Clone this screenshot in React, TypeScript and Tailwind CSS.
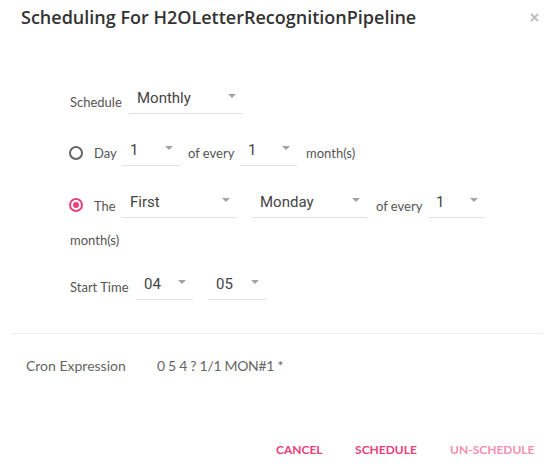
import React from "react";

const label = "font-['Lato','Liberation_Sans',sans-serif] text-[13px] leading-[20px] text-[#555]";

function Arrow() {
  return (
    <svg className="absolute right-[7px] top-[10px]" width="8" height="4" viewBox="0 0 8 4">
      <path d="M0 0 L8 0 L4 4 Z" fill="#a3a3a3" />
    </svg>
  );
}

function Select({ value, w }: { value: string; w: string }) {
  return (
    <div className={`relative h-[30px] border-b border-[#e0e0e0] ${w}`}>
      <div className="pt-[4px] pl-[8px] font-['Roboto',sans-serif] text-[15px] leading-[20px] text-[#444]">
        {value}
      </div>
      <Arrow />
    </div>
  );
}

function Radio({ checked }: { checked?: boolean }) {
  return (
    <div
      className={`mt-[10px] ml-[-1px] flex h-[14px] w-[14px] items-center justify-center rounded-full border-2 ${
        checked ? "border-[#ec407a]" : "border-[#666]"
      }`}
    >
      {checked && <div className="h-[6px] w-[6px] rounded-full bg-[#ec407a]" />}
    </div>
  );
}

export default function App() {
  return (
    <div className="h-[475px] w-[553px] bg-white">
      {/* header */}
      <div className="flex items-start justify-between pl-[21px] pr-[14px] pt-[5px]">
        <h1 className="font-['Open_Sans','Noto_Sans',sans-serif] text-[18px] font-semibold leading-[24px] text-[#333]">
          Scheduling For H2OLetterRecognitionPipeline
        </h1>
        <svg className="mt-[8px]" width="9" height="9" viewBox="0 0 9 9">
          <path d="M1 1 L8 8 M8 1 L1 8" stroke="#bdbdbd" strokeWidth="1.8" />
        </svg>
      </div>

      {/* form */}
      <div className="pl-[70px]">
        <div className="mt-[55px] flex items-start">
          <span className={`${label} mt-[8px] w-[59px]`}>Schedule</span>
          <Select value="Monthly" w="w-[114px]" />
        </div>

        <div className="mt-[22px] flex items-start">
          <Radio />
          <span className={`${label} ml-[11px] mt-[7px] w-[28px]`}>Day</span>
          <Select value="1" w="w-[58px]" />
          <span className={`${label} ml-[8px] mt-[7px] w-[52px]`}>of every</span>
          <Select value="1" w="w-[57px]" />
          <span className={`${label} ml-[9px] mt-[7px]`}>month(s)</span>
        </div>

        <div className="mt-[22px] flex items-start">
          <Radio checked />
          <span className={`${label} ml-[11px] mt-[8px] w-[28px]`}>The</span>
          <Select value="First" w="w-[115px]" />
          <div className="ml-[15px]">
            <Select value="Monday" w="w-[115px]" />
          </div>
          <span className={`${label} ml-[9px] mt-[8px] w-[52px]`}>of every</span>
          <Select value="1" w="w-[57px]" />
        </div>
        <div className={`${label} mt-[12px]`}>month(s)</div>

        <div className="mt-[20px] flex items-start">
          <span className={`${label} mt-[7px] w-[66px]`}>Start Time</span>
          <Select value="04" w="w-[57px]" />
          <div className="ml-[15px]">
            <Select value="05" w="w-[58px]" />
          </div>
        </div>
      </div>

      <div className="mx-[11px] mt-[33px] h-px bg-[#ececec]" />

      <div className="mt-[22px] flex pl-[26px] font-['Lato','Liberation_Sans',sans-serif] text-[14px] leading-[20px] text-[#666]">
        <span className="w-[131px]">Cron Expression</span>
        <span className="tracking-[-0.3px]">0 5 4 ? 1/1 MON#1 *</span>
      </div>

      <div className="mt-[56px] flex justify-end gap-[33px] whitespace-nowrap pr-[20px] font-['Lato','Liberation_Sans',sans-serif] text-[12px] font-bold leading-[36px]">
        <button className="w-[46px] text-center text-[#ec407a]">CANCEL</button>
        <button className="w-[62px] text-center text-[#ec407a]">SCHEDULE</button>
        <button className="w-[83px] text-center text-[#f48fb1]">UN-SCHEDULE</button>
      </div>
    </div>
  );
}
